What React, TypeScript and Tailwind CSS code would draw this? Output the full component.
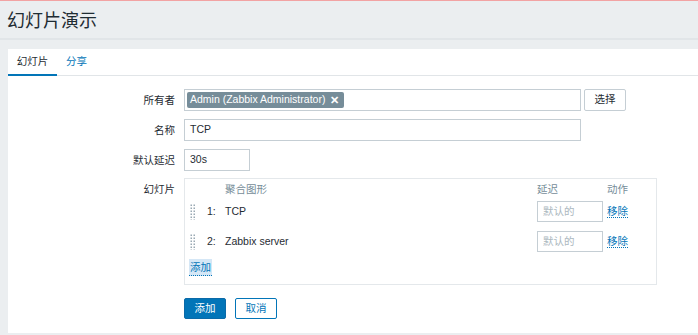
import React from 'react';

const slides = [
  { num: '1:', name: 'TCP' },
  { num: '2:', name: 'Zabbix server' },
];

const DragHandle: React.FC = () => (
  <svg width="6" height="16" viewBox="0 0 6 16" className="block">
    {[0, 1, 2, 3, 4, 5].map((r) =>
      [0, 1].map((c) => (
        <rect key={`${r}-${c}`} x={c * 3 + 0.5} y={r * 3 + 0.5} width="1.5" height="1.5" fill="#9aa9b3" />
      ))
    )}
  </svg>
);

const FormRow: React.FC<{ label: string; className?: string; children: React.ReactNode }> = ({ label, className = '', children }) => (
  <div className={`flex ${className}`}>
    <div className="w-[167px] shrink-0 text-right leading-[22px] text-[#1f2c33]">{label}</div>
    <div className="ml-[9px] flex">{children}</div>
  </div>
);

export default function App() {
  return (
    <div className="w-[698px] h-[335px] overflow-hidden bg-[#ebeef0] border-t border-[#f2a3a3] font-['Liberation_Sans','Noto_Sans_CJK_SC',sans-serif] text-[10.5px] text-[#1f2c33]">
      {/* page title */}
      <div className="h-[39px] pl-[7px] pt-[3px] flex items-center border-b-2 border-[#e1e5e8]">
        <h1 className="text-[18px] leading-none text-[#1f2c33] font-normal">幻灯片演示</h1>
      </div>

      <div className="ml-[8px] mt-[9px] h-[284px] bg-white">
        {/* tabs */}
        <div className="h-[27px] flex border-b border-[#e1e5e8]">
          <div className="w-[49px] h-[27px] flex items-center justify-center border-b-2 border-[#0275b8] text-[#1f2c33]">幻灯片</div>
          <div className="px-[9px] h-[26px] flex items-center text-[#0275b8]">分享</div>
        </div>

        <div className="pt-[13px]">
          <FormRow label="所有者">
            <div className="w-[397px] h-[22px] border border-[#c5ced4] flex items-center pl-[2px]">
              <span className="h-[16px] bg-[#768d99] text-white flex items-center pl-[3px] pr-[5px] rounded-[2px]">
                Admin (Zabbix Administrator)
                <span className="ml-[5px] font-bold text-[11px] leading-none">✕</span>
              </span>
            </div>
            <button className="ml-[3px] w-[42px] h-[22px] border border-[#c5ced4] bg-white text-[#1f2c33] rounded-[2px]">选择</button>
          </FormRow>

          <FormRow label="名称" className="mt-[8px]">
            <div className="w-[397px] h-[22px] border border-[#c5ced4] flex items-center px-[5px]">TCP</div>
          </FormRow>

          <FormRow label="默认延迟" className="mt-[8px]">
            <div className="w-[66px] h-[22px] border border-[#c5ced4] flex items-center px-[5px]">30s</div>
          </FormRow>

          <FormRow label="幻灯片" className="mt-[7px]">
            <div className="w-[473px] h-[107px] border border-[#e4e8eb] pl-[5px]">
              <div className="h-[22px] flex items-center text-[#768d99]">
                <div className="w-[35px]" />
                <div className="flex-1">聚合图形</div>
                <div className="w-[70px]">延迟</div>
                <div className="w-[49px]">动作</div>
              </div>
              {slides.map((s) => (
                <div key={s.num} className="h-[21px] mb-[9px] flex items-center">
                  <div className="w-[17px]"><DragHandle /></div>
                  <div className="w-[18px]">{s.num}</div>
                  <div className="flex-1">{s.name}</div>
                  <div className="w-[70px]">
                    <div className="w-[66px] h-[21px] border border-[#c5ced4] flex items-center px-[5px] text-[#acb8c0]">默认的</div>
                  </div>
                  <div className="w-[49px]">
                    <span className="text-[#0275b8] border-b border-dotted border-[#0275b8]">移除</span>
                  </div>
                </div>
              ))}
              <div className="-mt-[2px] ml-[-1px]">
                <span className="inline-block bg-[#d5e7f6] text-[#0275b8] border-b border-dotted border-[#0275b8] px-px leading-[16px]">添加</span>
              </div>
            </div>
          </FormRow>

          <div className="mt-[13px] ml-[176px] flex gap-[9px]">
            <button className="w-[42px] h-[21px] bg-[#0275b8] border border-[#0b6aa8] text-white rounded-[2px]">添加</button>
            <button className="w-[42px] h-[21px] bg-white border border-[#0275b8] text-[#0275b8] rounded-[2px]">取消</button>
          </div>
        </div>
      </div>
    </div>
  );
}
